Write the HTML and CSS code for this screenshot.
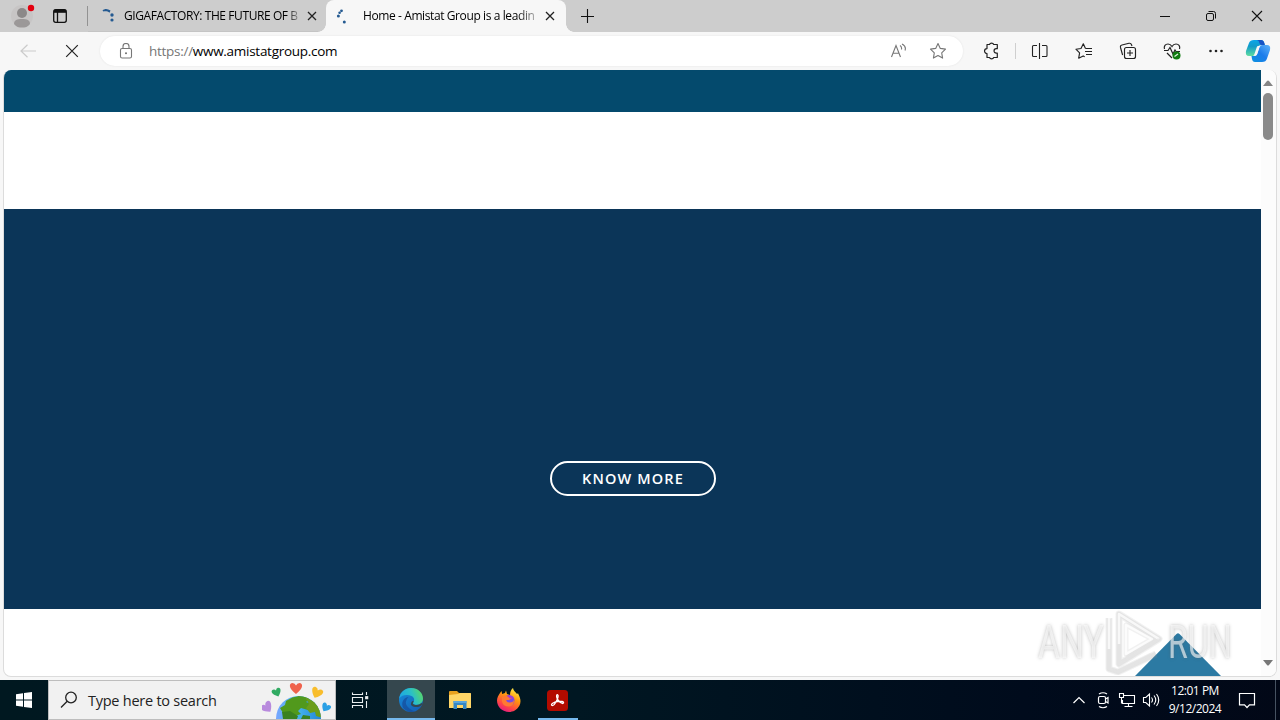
FILE: index.html
```html
<!DOCTYPE html>
<html lang="en">
<head>
<meta charset="utf-8">
<title>Home - Amistat Group</title>
<link rel="stylesheet" href="styles.css">
</head>
<body>
<div class="desktop">
  <header class="tabstrip">
    <div class="profile"><svg width="28" height="28" viewBox="0 0 28 28"><circle cx="14" cy="14" r="11" fill="#c7c5c5"/><circle cx="14" cy="11" r="5" fill="#8c8989"/><path d="M6 22c0-4 3-5 8-5s8 1 8 5c-2 3-5 3.500-8 3.500S8 25 6 22z" fill="#9b9898"/><circle cx="23" cy="6" r="3.200" fill="#e3000f"/></svg></div>
    <div class="tabactions"><svg width="16" height="16" viewBox="0 0 16 16" fill="none" stroke="#111" stroke-width="1.300"><rect x="1.700" y="1.700" width="12.600" height="12.600" rx="2"/><path d="M2 3.300h12" stroke-width="3"/><path d="M5.500 4v10"/></svg></div>
    <span class="strip-line"></span>
    <div class="tab tab-idle">
      <svg class="spin" width="16" height="16" viewBox="0 0 16 16" fill="#245a91"><path d="M1.500 2.500c2-2 5-2 8 0l-1 2.200C6.500 3 4.500 3 2.500 3.500z"/><circle cx="11" cy="7" r="1.700"/><circle cx="11" cy="12" r="1.600"/></svg>
      <span class="tab-title title-idle">GIGAFACTORY: THE FUTURE OF B</span>
      <svg class="tab-x" width="10" height="10" viewBox="0 0 10 10"><path d="M1 1l8 8M9 1L1 9" stroke="#222" stroke-width="1.300"/></svg>
    </div>
    <div class="tab tab-active">
      <svg class="spin" width="16" height="16" viewBox="0 0 16 16" fill="#245a91"><circle cx="5.500" cy="2.800" r="1.400"/><circle cx="3.600" cy="4.800" r="1.300"/><circle cx="2.400" cy="8" r="1.500"/><circle cx="8.300" cy="14" r="1.500"/></svg>
      <span class="tab-title title-active">Home - Amistat Group is a leadin</span>
      <svg class="tab-x" width="10" height="10" viewBox="0 0 10 10"><path d="M1 1l8 8M9 1L1 9" stroke="#222" stroke-width="1.300"/></svg>
    </div>
    <svg class="newtab" width="14" height="14" viewBox="0 0 14 14"><path d="M6.500 0v14M0 7.500h13" stroke="#111" stroke-width="1.100"/></svg>
    <div class="winbtns">
      <span><svg width="12" height="12" viewBox="0 0 12 12"><path d="M1 6.500h10" stroke="#111"/></svg></span>
      <span><svg width="12" height="12" viewBox="0 0 12 12" fill="none" stroke="#111"><rect x="1.500" y="3.500" width="7" height="7" rx="1.500"/><path d="M3.500 1.500H8.500Q10.500 1.500 10.500 3.500V8.500"/></svg></span>
      <span><svg width="12" height="12" viewBox="0 0 12 12"><path d="M1 1l10 10M11 1L1 11" stroke="#111" stroke-width="1.100"/></svg></span>
    </div>
  </header>

  <nav class="toolbar">
    <svg class="back" width="16" height="14" viewBox="0 0 16 14" fill="none" stroke="#cbcbcb" stroke-width="1.200"><path d="M16 7H1M7.500 .8L1 7l6.500 6.200"/></svg>
    <svg class="stop" width="14" height="14" viewBox="0 0 14 14"><path d="M1.200 1.200l11.600 11.600M12.800 1.200L1.200 12.800" stroke="#222" stroke-width="1.200"/></svg>
    <div class="address">
      <svg class="lock" width="14" height="16" viewBox="0 0 14 16" fill="none" stroke="#777" stroke-width="1.100"><rect x="1.500" y="5.500" width="11" height="9.500" rx="1.600"/><path d="M4 5.500V3.500a3 3 0 0 1 6 0v2"/><circle cx="7" cy="10.300" r=".5" fill="#777"/></svg>
      <span class="url"><span class="scheme">https://</span><span class="host">www.amistatgroup.com</span></span>
      <svg class="read" width="17" height="16" viewBox="0 0 17 16" fill="none" stroke="#767676" stroke-width="1.100"><path d="M1.500 14L6 2.500 10.500 14M3 10.300h6M10 2.500c1.500 1 1.800 2.500 1.500 4M12 1c3 1.500 4 3.800 3 6.500"/></svg>
      <svg class="star" width="18" height="18" viewBox="0 0 18 18" fill="none" stroke="#767676" stroke-width="1.100" stroke-linejoin="round"><path d="M9 1.500l2.300 4.900 5.200.7-3.800 3.700.9 5.300L9 13.500l-4.600 2.600.9-5.300-3.800-3.700 5.200-.7z"/></svg>
    </div>
    <div class="tools">
      <span class="tool"><svg width="18" height="18" viewBox="0 0 18 18" fill="none" stroke="#222" stroke-width="1.200"><path d="M5 2.500H7.500a2.200 2 0 0 1 4.200 0h3.600v4.200h-1a2.200 2.200 0 0 0 0 4.500h1v4.300h-3.600a2.200 2 0 0 1-4.200 0H5v-4a2.400 2.400 0 0 1 0-4.900z" stroke-linejoin="round"/></svg></span>
      <span class="tool-line"></span>
      <span class="tool"><svg width="18" height="18" viewBox="0 0 18 18" fill="none" stroke="#222" stroke-width="1.100"><path d="M6 3.500H2.500Q1.500 3.500 1.500 4.500v9q0 1 1 1H6M11 3.500h4q1 0 1 1v9q0 1-1 1h-4M8.500 1v16"/></svg></span>
      <span class="tool"><svg width="18" height="18" viewBox="0 0 18 18" fill="none" stroke="#222" stroke-width="1.150" stroke-linejoin="round"><path d="M10.500 6.500L8.300 1.800 6 6.500.9 7.200l3.700 3.700-.9 5.300 4.500-2.300 1.500.8M10.500 6.500h6.500M10 9.500h7M11 12.500h6"/></svg></span>
      <span class="tool"><svg width="18" height="18" viewBox="0 0 18 18" fill="none" stroke="#222" stroke-width="1.150"><rect x="5.500" y="5.500" width="11" height="11" rx="2"/><path d="M11 8v6M8 11h6M3.600 13L1.500 5.500Q1 3.500 3 3l7-1.700q2-.4 2.500 1.500l.5 1.200"/></svg></span>
      <span class="tool"><svg width="18" height="18" viewBox="0 0 18 18" fill="none" stroke="#222" stroke-width="1.200"><path d="M1.500 7C.5 4 2.500 2 5 2q2.500 0 4 2.500Q10.500 2 13 2c2.500 0 4.500 2 3.500 5M1 8.500h4l2-3 3 6.500 2-4 1 1.500h4M4 11l5 5"/><circle cx="13.500" cy="13.500" r="4" fill="#107c10" stroke="none"/><path d="M11.500 14.500l3.500-2.500" stroke="#dff0df"/></svg></span>
      <span class="tool"><svg width="18" height="18" viewBox="0 0 18 18" fill="#222"><circle cx="3.500" cy="9" r="1.300"/><circle cx="9" cy="9" r="1.300"/><circle cx="14.500" cy="9" r="1.300"/></svg></span>
      <span class="copilot"><svg width="26" height="24" viewBox="0 0 26 24"><defs><linearGradient id="ca" x1="0" y1="0" x2="0" y2="1"><stop stop-color="#0aa5e8"/><stop offset=".4" stop-color="#119bc9"/><stop offset="1" stop-color="#5fdda0"/></linearGradient><linearGradient id="cb" x1="0" y1="1" x2="1" y2="0"><stop stop-color="#0a91df"/><stop offset=".5" stop-color="#1c7ceb"/><stop offset="1" stop-color="#5fb4fa"/></linearGradient></defs><path d="M9 1h7q2.500 0 3.300 3l.5 2H16q-2 0-3 3l-2 6q-.6 2-3 2H4q-4 0-3-5L4 4q1-3 5-3z" fill="url(#ca)"/><path d="M17 23h-7q-2.500 0-3-3l-.5-3H9q2.500 0 3.200-2.500L14.300 8q.8-2 3.200-2H22q4 0 3 5l-3 8.500q-1 3.500-5 3.500z" fill="url(#cb)"/><path d="M12 7.500q.8-1 3.700-.8-1 .8-1.400 2.300l-2 6q-.6 2.200-4 2 .8-.8 1.300-2.500z" fill="#f7f7f7"/><path d="M12 1h4q2.500 0 3.300 3l.5 2h-3.300q-1.500 0-2-1.800Q14 1.500 12 1z" fill="#1753c5"/></svg></span>
    </div>
  </nav>

  <div class="window-body">
    <main class="page">
      <div class="topbar"></div>
      <div class="masthead"></div>
      <section class="hero"><a class="more">KNOW MORE</a></section>
      <div class="below"><svg class="peak" width="86" height="43" viewBox="0 0 86 43"><path d="M0 43L41.500 1Q43-.5 44.500 1L86 43z" fill="#2c7aa3"/></svg></div>
    </main>
    <aside class="scroll">
      <svg width="10" height="6" viewBox="0 0 10 6"><path d="M0 6L4 1Q5 0 6 1l4 5z" fill="#858585"/></svg>
      <span class="thumb"></span>
      <svg class="down" width="10" height="6" viewBox="0 0 10 6"><path d="M0 0L4 5Q5 6 6 5l4-5z" fill="#777"/></svg>
    </aside>
  </div>

  <footer class="taskbar">
    <div class="start"><svg width="16" height="16" viewBox="0 0 16 16" fill="#fff"><path d="M0 2.200L7 1.200v6.300H0zM8 1.100L16 0v7.500H8zM0 8.500h7v6.300l-7-1zM8 8.500h8V16l-8-1.100z"/></svg></div>
    <div class="search">
      <svg class="glass" width="18" height="18" viewBox="0 0 18 18" fill="none" stroke="#222" stroke-width="1.300"><circle cx="11" cy="6.500" r="5.300"/><path d="M7.200 10.300L1 16.500"/></svg>
      <span class="hint">Type here to search</span>
      <svg class="earth" width="72" height="38" viewBox="0 0 72 38">
        <defs><linearGradient id="ea"><stop stop-color="#78a6ff"/><stop offset=".45" stop-color="#48b6ed"/><stop offset="1" stop-color="#2386d9"/></linearGradient><path id="ht" d="M0 5C-8-1-7-6-3.500-6Q-1-6 0-3.500Q1-6 3.500-6C7-6 8-1 0 5z"/><clipPath id="globe"><circle cx="36.500" cy="37.500" r="22.500"/></clipPath></defs>
        <circle cx="36.500" cy="37.500" r="22.500" fill="url(#ea)"/>
        <g clip-path="url(#globe)"><path d="M24 20q9-6 18-5l6 3-4 3 5 2-3 6-7-2-3 3 3 3-6 2-5-4-7 1-3-5 5-3z" fill="#51991c"/><path d="M43 16l14 7 4 14-7-2-1-4-5 1-4-5 3-4z" fill="#6b9d1b"/><path d="M20 31l8-1 8 5-1 3H21zM41 34l7 1v3h-9z" fill="#3a8121"/></g>
        <use href="#ht" transform="translate(34 8)" fill="#ef624c"/><use href="#ht" transform="translate(15 12) rotate(-22) scale(.75)" fill="#30aa62"/><use href="#ht" transform="translate(54.500 12.500) rotate(24) scale(.93)" fill="#f8bd2c"/><use href="#ht" transform="translate(5.500 27) rotate(-38) scale(.95)" fill="#b88add"/><use href="#ht" transform="translate(63.500 27) rotate(32) scale(.75)" fill="#2ba0e5"/>
      </svg>
    </div>
    <div class="app taskview"><svg width="18" height="18" viewBox="0 0 18 18" fill="none" stroke="#e9eef0" stroke-width="1.100"><path d="M1.500 1.500v2h10v-2M1.500 17v-2.500h10V17M1.500 6.500h10v5h-10zM15.500 1v3M15.500 10v7"/><rect x="14.700" y="5.700" width="2" height="2" fill="#fff"/></svg></div>
    <div class="app edge"><svg width="24" height="24" viewBox="0 0 24 24"><defs><linearGradient id="e1" x1="0" y1=".6" x2="1" y2=".3"><stop stop-color="#1ca5e5"/><stop offset=".55" stop-color="#2ac0c7"/><stop offset="1" stop-color="#5bd863"/></linearGradient><linearGradient id="e2" x1="0" y1="0" x2="1" y2="1"><stop stop-color="#168ddb"/><stop offset="1" stop-color="#155ab0"/></linearGradient></defs><circle cx="12" cy="12" r="12" fill="url(#e2)"/><path d="M.2 10.500C1 4.500 6 0 12 0c7 0 12 5 12 10.500 0 4-3 6.300-6.500 6.300-3 0-4.200-1.300-3-2.700 1.300-1.800.8-4.600-2-6C8.500 6.200 2.500 7 .2 10.500z" fill="url(#e1)"/><path d="M14.300 14.200c-1.200 1.300 0 2.700 3.200 2.700 2 0 3.700-.7 5-2l1 1c-1 1.500-2.500 2.500-4.500 3-4.500.5-7.500-1-7-3.500.3-1.500 1.300-2.500 2-2.300.8.300.7.700.3 1.400z" fill="#35474e"/><path d="M9.500 9Q5 13 8 18q3 4 8 5.200-3 1.300-7 .2Q2 20.500 3.500 14 5 9.500 9.500 9z" fill="#164e9c" opacity=".75"/></svg></div>
    <div class="app"><svg width="22" height="20" viewBox="0 0 22 20"><path d="M0 2q0-1 1-1h7l2 2h11q1 0 1 1v5H0z" fill="#e9a21f"/><path d="M0 5l9-1 2-1h10q1 0 1 1v14H0z" fill="#ffd667"/><path d="M4.500 19v-8h13v8H14v-4H8v4z" fill="#3587c4"/><path d="M4.500 11h13v2h-13z" fill="#59a5dc"/></svg></div>
    <div class="app"><svg width="24" height="24" viewBox="0 0 24 24"><defs><linearGradient id="ff" x1=".8" y1="0" x2=".3" y2="1"><stop stop-color="#fff44f"/><stop offset=".4" stop-color="#ff980e"/><stop offset=".75" stop-color="#ff4645"/><stop offset="1" stop-color="#e51a83"/></linearGradient></defs><path d="M3 5L4.500 3l.7 3L8 5l1-2.500 1 3.500 3 1c0-3 1-5.500 3-7 .3 3 3 4 4 6l1-.8C24 11 24 14 22.500 17.500 20 22 16 24 12 24 5.500 24 0 19 0 12.500 0 10 1.500 7 3 5z" fill="url(#ff)"/><circle cx="12" cy="12.500" r="5.500" fill="#7b4ae0"/><path d="M5 9q4-3 7 0l3 1-3 2H9q1 3 4 2.500 3 0 4-2.500 0 6-5 6.500-6 0-7-5z" fill="#ff7a32"/><path d="M10 8q5-2 7 3-2-1-4-.5z" fill="#a43bd6"/></svg></div>
    <div class="app acrobat"><svg width="21" height="21" viewBox="0 0 21 21"><rect width="21" height="21" rx="3.500" fill="#b30b00"/><path d="M5 15.500c-2-1 2-3.500 5.500-4s6.500 0 6 1.500c-1 1.500-4-1-5.500-3S9 5 10.300 4.700c1.600.3.500 3.800-.8 6.300S6.500 16 5 15.500z" fill="none" stroke="#fff" stroke-width="1.300"/></svg></div>
    <div class="tray">
      <span class="ti"><svg width="14" height="10" viewBox="0 0 14 10" fill="none" stroke="#fff" stroke-width="1.200"><path d="M1.500 8L7 2.500 12.500 8"/></svg></span>
      <span class="ti"><svg width="14" height="18" viewBox="0 0 14 18" fill="none" stroke="#fff" stroke-width="1.200"><rect x="2.500" y="5.500" width="7" height="7" rx="1.500"/><path d="M9.500 8l2.500-1.500v5.500l-2.500-1.500M3 3q4-2.500 8 0M3 15.500q4 2.500 8 0"/></svg></span>
      <span class="ti"><svg width="18" height="16" viewBox="0 0 18 16" fill="none" stroke="#fff" stroke-width="1.100"><path d="M6 3.500h10.500v8H4.500V8M10.500 11.500v3M6.500 14.500h8M1.500 1.500h4v4h-4zM3.500 5.500v6"/></svg></span>
      <span class="ti"><svg width="18" height="16" viewBox="0 0 18 16" fill="none" stroke="#fff" stroke-width="1.100"><path d="M1.500 5.500h2.300L7.500 2v12l-3.700-3.500H1.500zM9.500 5.500q2 2.500 0 5M12 3.500q3.500 4.500 0 9M14.500 2q4.500 6 0 12"/></svg></span>
      <div class="clock"><span class="time">12:01 PM</span><span class="date">9/12/2024</span></div>
      <svg class="note" width="18" height="18" viewBox="0 0 18 18" fill="none" stroke="#fff" stroke-width="1.200"><path d="M1.500 2.500h15v11.300h-5L9 16.500l-2.500-2.700h-5z"/></svg>
      <span class="peek"></span>
    </div>
  </footer>

  <div class="watermark">
    <span class="wm any">ANY</span>
    <svg width="64" height="66" viewBox="0 0 64 66" fill="none" stroke-linejoin="round"><g stroke="#8f8f8f" stroke-opacity=".13"><path d="M15 5l40 25-40 25zM5 9v51l9 3 38-18" stroke-width="7"/><path d="M15 5l40 25-40 25zM5 9v51l9 3 38-18M22 16v29l26-15z" stroke-width="5"/></g><g stroke="#fff" stroke-opacity=".75" stroke-width="2.500"><path d="M15 35V5l40 25M5 40V9l6-3M22 16v29l26-15z"/></g><g stroke="#e4e4e4" stroke-opacity=".6" stroke-width="2.500"><path d="M15 35v20l40-25M5 40v20l9 3 33-18"/></g></svg>
    <span class="wm run">RUN</span>
  </div>
</div>
</body>
</html>
```

FILE: styles.css
```css
* { box-sizing: border-box; }
body { margin: 0; font-family: "Open Sans", "Noto Sans", sans-serif; }
svg { display: block; flex: none; }
.desktop { position: relative; width: 1280px; height: 720px; overflow: hidden; background: #f7f7f7; display: flex; flex-direction: column; }

.tabstrip { height: 32px; background: #cdcdcd; display: flex; align-items: center; flex: none; }
.profile { width: 44px; padding-left: 8px; }
.tabactions { width: 43px; padding-left: 8px; }
.strip-line { width: 1px; height: 20px; background: #929292; }
.tab { height: 32px; display: flex; align-items: center; font-size: 12px; color: #000; }
.tab-idle { width: 238px; padding-left: 13px; border-bottom: 1px solid #c4c4c4; border-radius: 0 0 8px 0; }
.tab-active { width: 240px; padding-left: 10px; background: #f7f7f7; border-radius: 8px 8px 0 0; position: relative; }
.tab-active::before, .tab-active::after { content: ""; position: absolute; bottom: 0; width: 8px; height: 8px; }
.tab-active::before { left: -8px; background: radial-gradient(circle at 0 0, #cdcdcd 7.500px, #f7f7f7 8px); }
.tab-active::after { right: -8px; background: radial-gradient(circle at 100% 0, #cdcdcd 7.500px, #f7f7f7 8px); }
.tab-title { white-space: nowrap; line-height: 20px; }
.title-idle { width: 175px; margin-left: 7px; letter-spacing: -.41px; -webkit-mask-image: linear-gradient(90deg, #000 93%, transparent 102%); mask-image: linear-gradient(90deg, #000 93%, transparent 102%); }
.title-active { width: 174px; margin-left: 11px; letter-spacing: -.4px; -webkit-mask-image: linear-gradient(90deg, #000 88%, transparent 104%); mask-image: linear-gradient(90deg, #000 88%, transparent 104%); }
.tab-x { margin-left: 8px; }
.newtab { margin-left: 15px; }
.winbtns { margin-left: auto; display: flex; }
.winbtns span { width: 46px; display: flex; justify-content: center; }

.toolbar { height: 38px; display: flex; align-items: center; flex: none; }
.back { margin-left: 20px; }
.stop { margin-left: 29px; }
.address { width: 863px; height: 30px; margin-left: 21px; background: #fff; border-radius: 15px; display: flex; align-items: center; padding-left: 19px; box-shadow: 0 0 2px #e1e1e1; }
.url { margin-left: 16px; font-size: 13.500px; line-height: 20px; letter-spacing: -.28px; white-space: nowrap; }
.scheme { color: #767676; }
.host { color: #000; }
.read { margin-left: auto; }
.star { margin: 0 16px 0 22px; }
.tools { margin-left: 6px; display: flex; align-items: center; }
.tool { width: 44px; display: flex; justify-content: center; }
.tool-line { width: 1px; height: 16px; margin: 0 2px; background: #cfcfcf; }
.copilot { width: 40px; display: flex; justify-content: center; }

.window-body { height: 607px; width: 1274px; margin-left: 3px; display: flex; flex: none; background: #fff; border: 1px solid #dcdcdc; border-top: 0; border-radius: 8px; overflow: hidden; }
.page { width: 1257px; display: flex; flex-direction: column; }
.topbar { height: 42px; background: #044a6d; }
.masthead { height: 97px; }
.hero { height: 400px; background: #0b3558; display: flex; flex-direction: column; align-items: center; padding-top: 252px; }
.more { width: 166px; height: 35px; margin-left: 1px; border: 2px solid #fff; border-radius: 18px; color: #fff; font: 600 14.500px/31px "Open Sans", sans-serif; letter-spacing: 1.150px; text-align: center; white-space: nowrap; }
.below { flex: 1; display: flex; justify-content: flex-end; align-items: flex-end; padding-right: 40px; }
.scroll { width: 15px; background: #fcfcfc; display: flex; flex-direction: column; align-items: center; padding: 10px 1px 10px 0; }
.thumb { width: 10px; height: 47px; border-radius: 5px; background: #8a8a8a; margin-top: 7px; }
.down { margin-top: auto; }

.taskbar { margin-top: 3px; height: 40px; background: linear-gradient(90deg, #001820 0, #001722 45%, #000b1c 80%, #020817); display: flex; align-items: stretch; flex: none; }
.start { width: 48px; display: flex; align-items: center; justify-content: center; }
.search { width: 288px; background: #f1f1f1; border: 1px solid #bdbdbd; display: flex; align-items: center; padding-left: 11px; }
.hint { margin-left: 10px; font-size: 14.500px; color: #222; letter-spacing: -.25px; white-space: nowrap; }
.earth { margin-left: auto; margin-right: 1px; }
.app { width: 49px; display: flex; align-items: center; justify-content: center; }
.taskview { width: 51px; padding-right: 3px; }
.edge { width: 48px; background: #35474e; border-bottom: 2px solid #76b9ed; padding-top: 2px; }
.acrobat { width: 40px; margin-left: 5px; border-bottom: 2px solid #76b9ed; padding-top: 2px; padding-right: 1px; }
.tray { margin-left: auto; display: flex; align-items: center; color: #fff; }
.ti { width: 24px; display: flex; justify-content: center; }
.clock { width: 64px; display: flex; flex-direction: column; align-items: center; font-size: 12px; line-height: 18px; white-space: nowrap; letter-spacing: -.48px; }
.note { margin-left: 11px; }
.peek { width: 5px; height: 40px; border-left: 1px solid #465261; margin-left: 19px; }

.watermark { position: absolute; left: 1038px; top: 609px; display: flex; align-items: center; }
.wm { font: 400 46px/66px "Roboto", sans-serif; color: rgba(255,255,255,.62); text-shadow: 0 0 4px rgba(90,90,90,.4); display: block; transform-origin: 0 50%; white-space: nowrap; }
.any { width: 66px; transform: scaleX(.73); }
.run { width: 64px; transform: scaleX(.7); }
```
